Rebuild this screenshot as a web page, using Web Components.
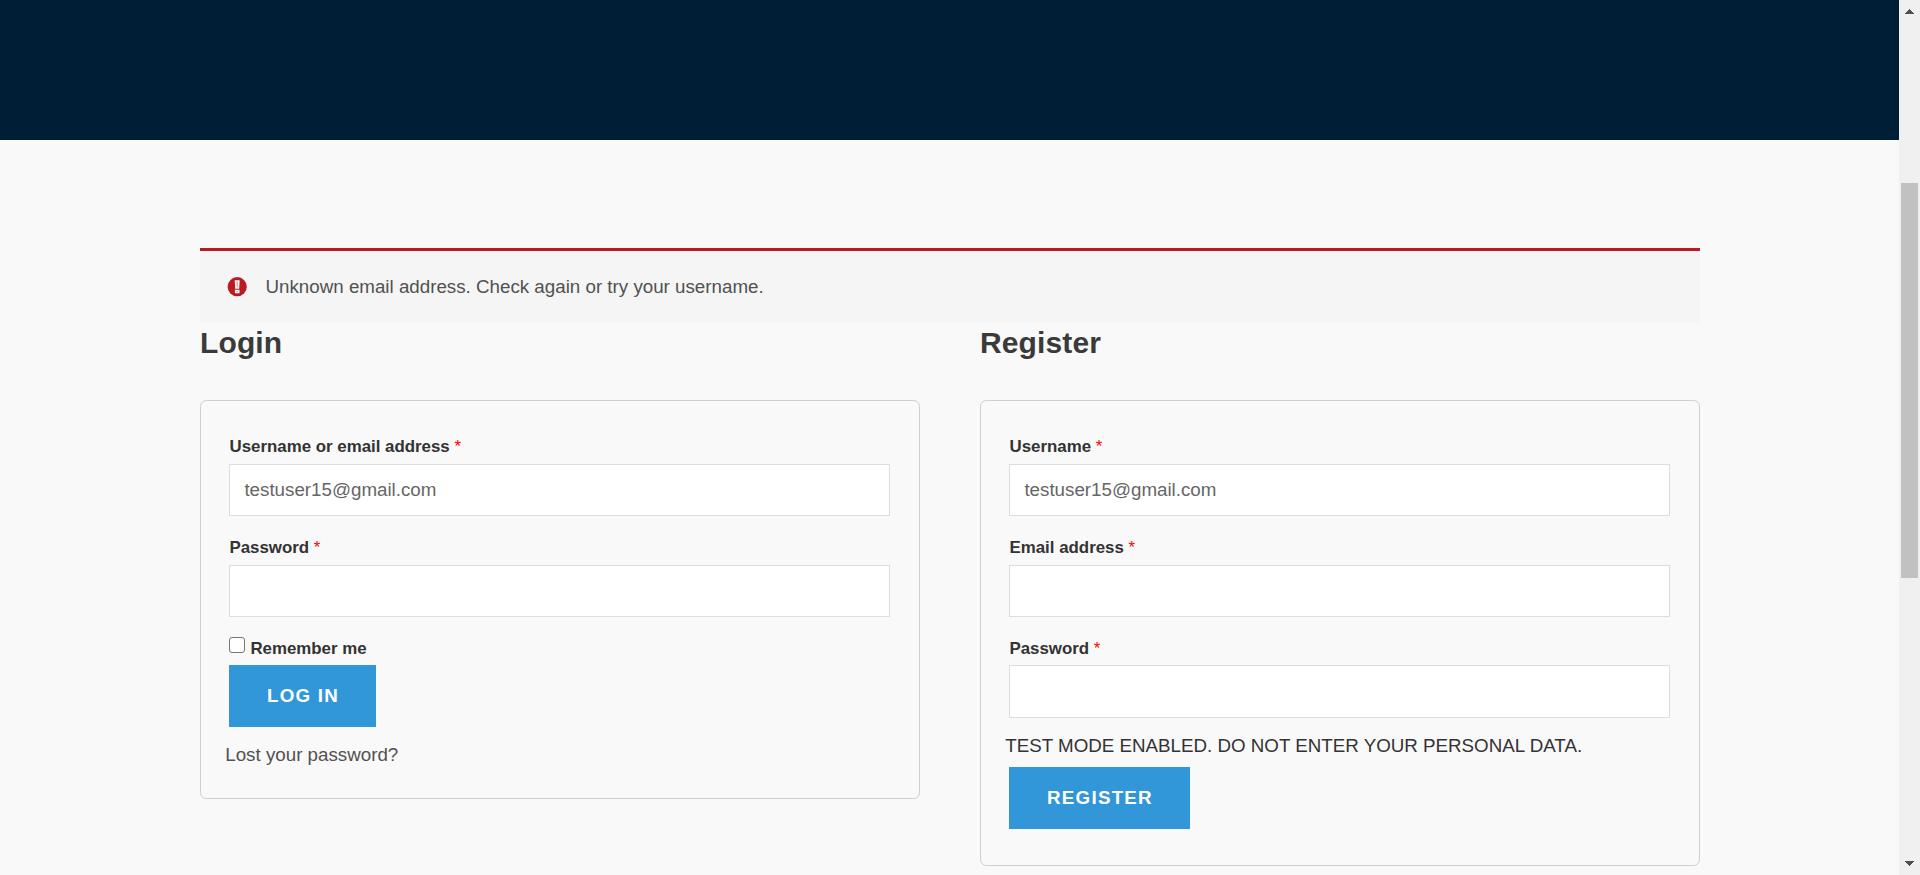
<!DOCTYPE html>
<html lang="en">
<head>
<meta charset="utf-8">
<title>My account</title>
<style>
html,body{margin:0;height:100%;overflow:hidden}
body{background:#f9f9f9;font:18.75px "Liberation Sans",Arial,sans-serif;color:#333}
</style>
</head>
<body>
<account-page>
  <error-notice>Unknown email address. Check again or try your username.</error-notice>
  <account-columns>
    <form-panel heading="Login" style="--h:397px">
      <form-field label="Username or email address" value="testuser15@gmail.com"></form-field>
      <form-field label="Password"></form-field>
      <remember-check>Remember me</remember-check>
      <action-button style="--w:147px">LOG IN</action-button>
      <text-line style="--top:14px;--c:#515151">Lost your password?</text-line>
    </form-panel>
    <form-panel heading="Register" style="--h:464px">
      <form-field label="Username" value="testuser15@gmail.com"></form-field>
      <form-field label="Email address"></form-field>
      <form-field label="Password" style="--label:34px;--input:53px"></form-field>
      <text-line style="--top:0px;--after:8px">TEST MODE ENABLED. DO NOT ENTER YOUR PERSONAL DATA.</text-line>
      <action-button style="--w:181px">REGISTER</action-button>
    </form-panel>
  </account-columns>
</account-page>
<script>
const define = (name, html, setup) => customElements.define(name, class extends HTMLElement {
  connectedCallback() {
    if (this.shadowRoot) return;
    this.attachShadow({mode: 'open'}).innerHTML = html;
    if (setup) setup(this, this.shadowRoot);
  }
});

define('account-page', `<style>
:host{display:grid;grid-template-columns:1fr 21px;height:875px}
.view{height:875px;overflow:hidden}
.banner{height:140px;background:#001e36}
main{width:1500px;margin:108px 0 0 200px}
</style><div class="view"><div class="banner"></div><main><slot></slot></main></div><page-scroll></page-scroll>`);

define('page-scroll', `<style>
:host{display:flex;flex-direction:column;background:#f0f0f0;height:875px}
svg{display:block;width:21px;flex:none;fill:#505050}
.thumb{width:17px;height:395px;margin:0 2px;background:#c1c1c1}
.rest{flex:1}
</style><svg height="183" viewBox="0 0 21 183" shape-rendering="crispEdges"><path d="M6 14v-1h1v-1h1v-1h1v-1h1v-1h1v1h1v1h1v1h1v1h1v1z"/></svg>
<div class="thumb"></div><div class="rest"></div>
<svg height="14" viewBox="0 0 21 14" shape-rendering="crispEdges"><path d="M6 0v1h1v1h1v1h1v1h1v1h1v-1h1v-1h1v-1h1v-1h1v-1z"/></svg>`);

define('error-notice', `<style>
:host{display:flex;align-items:center;box-sizing:border-box;height:75px;border-top:3px solid #b81c23;background:#f5f5f5;color:#515151;padding-left:27px}
svg{width:20px;height:20px;margin-right:18.5px;flex:none}
</style><svg viewBox="0 0 20 20"><circle cx="10.2" cy="9.7" r="9.6" fill="#b81c23"/><path d="M7.7 3.2h5l-.5 8.6h-4z M7.9 12.7h4.6v3.6H7.9z" fill="#f5f5f5"/><path d="M9.4 4.6h1.6l-.3 5.8h-1z M9.5 14h1.4v1H9.5z" fill="#e3a5a8"/></svg><span><slot></slot></span>`);

define('account-columns', `<style>:host{display:grid;grid-template-columns:720px 720px;column-gap:60px;align-items:start}</style><slot></slot>`);

define('form-panel', `<style>
:host{display:block}
h2{margin:0 0 38px;font-size:30px;line-height:39px;font-weight:700;letter-spacing:.12px;color:#3a3a3a}
.panel{height:var(--h);box-sizing:content-box;padding:0 28px;border:1px solid #d0cfd0;border-radius:6.25px}
.inner{padding-top:28px}
</style><h2></h2><div class="panel"><div class="inner"><slot></slot></div></div>`,
(el, r) => { r.querySelector('h2').textContent = el.getAttribute('heading'); });

define('form-field', `<style>
:host{display:block;margin-bottom:14px}
label{display:block;box-sizing:border-box;height:var(--label,35px);padding-left:.5px;line-height:35px;font-size:16.875px;font-weight:700}
i{font-style:normal;font-weight:400;color:red}
input{display:block;box-sizing:border-box;width:661px;height:var(--input,52px);margin:0;padding:0 14.4px;border:1px solid #ddd;border-radius:0;background:#fff;font:inherit;color:#666;outline:0}
</style><label for="f"><span></span> <i>*</i></label><input id="f">`,
(el, r) => {
  r.querySelector('span').textContent = el.getAttribute('label');
  r.querySelector('input').value = el.getAttribute('value') || '';
});

define('remember-check', `<style>
:host{display:block;height:34px}
label{display:flex;font-size:16.875px;font-weight:700;line-height:35px}
input{appearance:none;box-sizing:border-box;width:16px;height:16px;margin:6px 5.4px 0 0;border:1px solid #767676;border-radius:3px;background:#fff}
</style><label><input type="checkbox"><span><slot></slot></span></label>`);

define('action-button', `<style>
:host{display:block}
button{display:block;width:var(--w);height:62px;padding:0 0 0 1px;border:0;background:#3197d8;color:#fff;font:700 18.75px/62px "Liberation Sans",Arial,sans-serif;letter-spacing:1.25px}
</style><button><slot></slot></button>`);

define('text-line', `<style>
:host{display:block;margin:var(--top,0) 0 var(--after,0) -3.75px;line-height:27px;color:var(--c,#333)}
</style><slot></slot>`);
</script>
</body>
</html>
